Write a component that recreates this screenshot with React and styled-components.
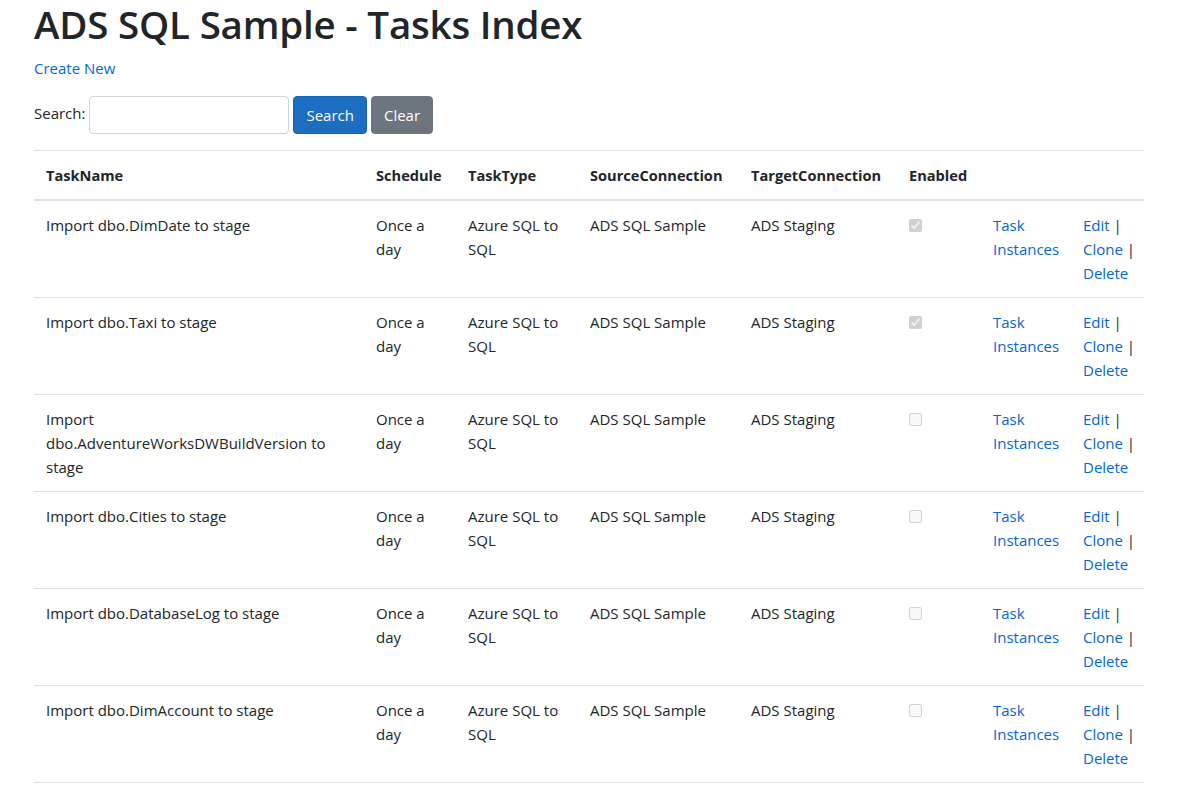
import styled, { createGlobalStyle } from 'styled-components';

const GlobalStyle = createGlobalStyle`
  html, body {
    margin: 0;
    padding: 0;
    background: #fff;
  }
  body {
    font-family: "Open Sans", "Liberation Sans", sans-serif;
    font-size: 15px;
    line-height: 24px;
    color: #212529;
  }
  * {
    box-sizing: border-box;
  }
`;

const Page = styled.div`
  width: 1110px;
  margin-left: 34px;
`;

const Title = styled.h1`
  margin: 0 0 8px;
  font-size: 38.5px;
  font-weight: 600;
  line-height: 48px;
  letter-spacing: -0.2px;
`;

const Link = styled.a`
  color: #0366d6;
  text-decoration: none;
  cursor: pointer;
`;

const Para = styled.p`
  margin: 0 0 16px;
`;

const SearchForm = styled.form`
  display: flex;
  align-items: center;
  gap: 4px;
  margin-bottom: 16px;
`;

const Label = styled.label`
  margin-top: -4px;
`;

const Input = styled.input`
  width: 200px;
  height: 38px;
  padding: 6px 12px;
  border: 1px solid #ced4da;
  border-radius: 4px;
  font: inherit;
`;

const Button = styled.button`
  height: 38px;
  padding: 6px 12px;
  border: 1px solid ${(p) => (p.$variant === 'primary' ? '#1861ac' : '#6c757d')};
  background: ${(p) => (p.$variant === 'primary' ? '#1b6ec2' : '#6c757d')};
  color: #fff;
  border-radius: 4px;
  font: inherit;
  font-size: 15px;
  cursor: pointer;
`;

const Table = styled.table`
  width: 1110px;
  table-layout: fixed;
  border-collapse: collapse;
  border-bottom: 1px solid #dee2e6;
`;

const Th = styled.th`
  text-align: left;
  padding: 12px;
  font-weight: 700;
  font-size: 14.6px;
  white-space: nowrap;
  border-top: 1px solid #dee2e6;
  border-bottom: 2px solid #dee2e6;
  vertical-align: bottom;
`;

const Td = styled.td`
  padding: 12px;
  border-top: 1px solid #dee2e6;
  vertical-align: top;
  height: 97px;
`;

const Check = styled.input`
  margin: 6px 0 0;
  width: 13px;
  height: 13px;
`;

const Sep = styled.span`
  color: #212529;
`;

const ActionLine = styled.span`
  display: block;
  white-space: nowrap;
`;

const widths = [330, 92, 122, 161, 158, 84, 90, 73];

const tasks = [
  { name: 'Import dbo.DimDate to stage', enabled: true },
  { name: 'Import dbo.Taxi to stage', enabled: true },
  { name: 'Import dbo.AdventureWorksDWBuildVersion to stage', enabled: false },
  { name: 'Import dbo.Cities to stage', enabled: false },
  { name: 'Import dbo.DatabaseLog to stage', enabled: false },
  { name: 'Import dbo.DimAccount to stage', enabled: false },
];

const App = () => {
  return (
    <>
      <GlobalStyle />
      <Page>
        <Title>ADS SQL Sample - Tasks Index</Title>
        <Para>
          <Link>Create New</Link>
        </Para>
        <SearchForm onSubmit={(e) => e.preventDefault()}>
          <Label>Search:</Label>
          <Input type="text" />
          <Button $variant="primary">Search</Button>
          <Button type="button">Clear</Button>
        </SearchForm>
        <Table>
          <colgroup>
            {widths.map((w, i) => (
              <col key={i} style={{ width: w }} />
            ))}
          </colgroup>
          <thead>
            <tr>
              <Th>TaskName</Th>
              <Th>Schedule</Th>
              <Th>TaskType</Th>
              <Th>SourceConnection</Th>
              <Th>TargetConnection</Th>
              <Th>Enabled</Th>
              <Th></Th>
              <Th></Th>
            </tr>
          </thead>
          <tbody>
            {tasks.map((t) => (
              <tr key={t.name}>
                <Td>{t.name}</Td>
                <Td>Once a day</Td>
                <Td>Azure SQL to SQL</Td>
                <Td>ADS SQL Sample</Td>
                <Td>ADS Staging</Td>
                <Td>
                  <Check type="checkbox" checked={t.enabled} disabled readOnly />
                </Td>
                <Td>
                  <Link>Task Instances</Link>
                </Td>
                <Td>
                  <ActionLine>
                    <Link>Edit</Link> <Sep>|</Sep>
                  </ActionLine>
                  <ActionLine>
                    <Link>Clone</Link> <Sep>|</Sep>
                  </ActionLine>
                  <ActionLine>
                    <Link>Delete</Link>
                  </ActionLine>
                </Td>
              </tr>
            ))}
          </tbody>
        </Table>
      </Page>
    </>
  );
};

export default App;
